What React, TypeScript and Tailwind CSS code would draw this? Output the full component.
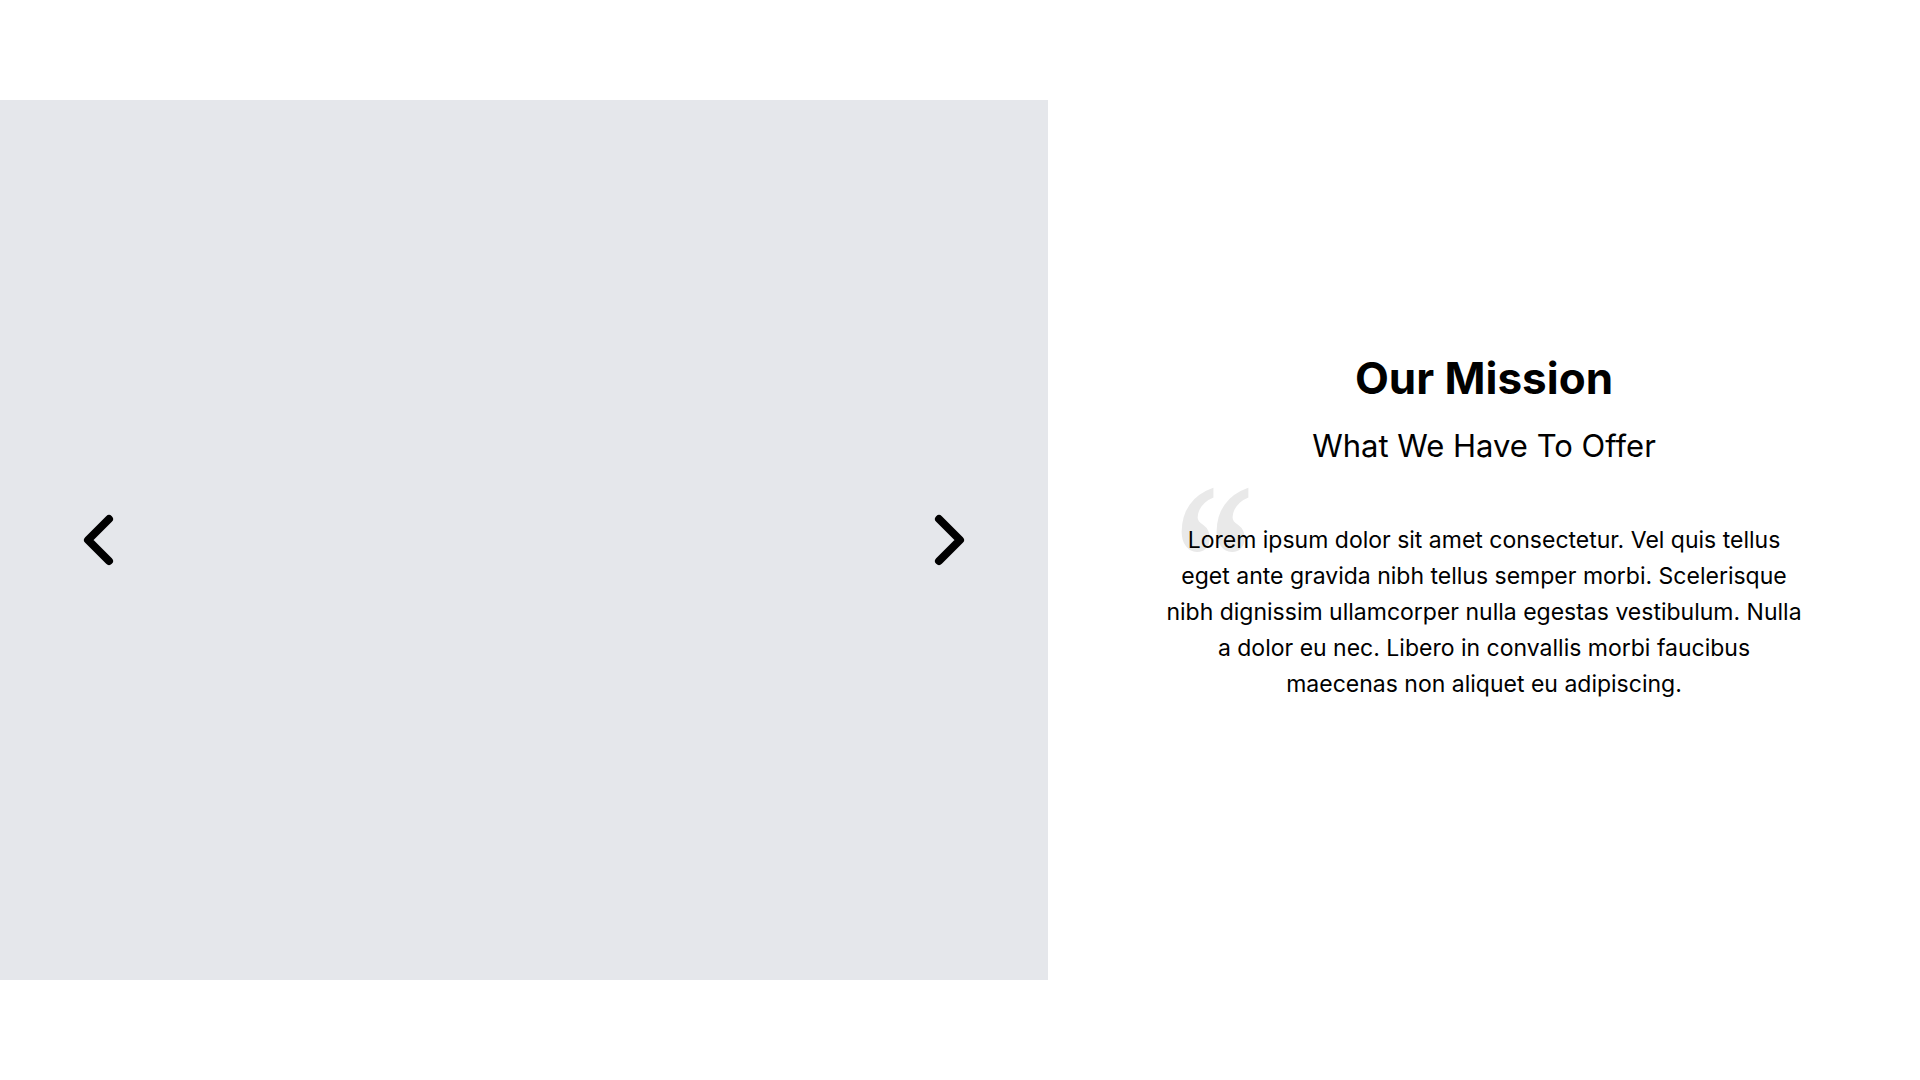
import { useState } from 'react'

const slides = ['slide-1', 'slide-2', 'slide-3']

function Chevron({ dir }: { dir: 'left' | 'right' }) {
  const d = dir === 'left' ? 'M27 5 L6 26 L27 47' : 'M5 5 L26 26 L5 47'
  return (
    <svg width="32" height="52" viewBox="0 0 32 52" fill="none">
      <path d={d} stroke="#000" strokeWidth="8" strokeLinecap="round" strokeLinejoin="round" />
    </svg>
  )
}

export default function App() {
  const [current, setCurrent] = useState(0)

  const prev = () => setCurrent((current - 1 + slides.length) % slides.length)
  const next = () => setCurrent((current + 1) % slides.length)

  return (
    <div className="w-full h-[1080px] bg-white py-[100px] flex" style={{ fontFamily: 'Inter, "Noto Sans", sans-serif' }}>
      {/* Image carousel */}
      <div
        className="w-[1048px] h-[880px] shrink-0 bg-gray-200 flex items-center justify-between px-[82px]"
        data-slide={slides[current]}
      >
        <button onClick={prev} className="cursor-pointer">
          <Chevron dir="left" />
        </button>
        <button onClick={next} className="cursor-pointer">
          <Chevron dir="right" />
        </button>
      </div>

      {/* Mission text */}
      <div className="flex-1 flex flex-col items-center justify-center pb-[26px] text-black">
        <h2 className="text-[44px] leading-[53px] font-bold">Our Mission</h2>
        <h3 className="text-[31px] leading-[36px] mt-[23px]">What We Have To Offer</h3>
        <div className="relative w-[640px] mt-[58px]">
          {/* decorative quote mark behind the text */}
          <span className="absolute left-[10px] -top-[70px] text-[212px] leading-none font-bold text-[#e9e9e9] select-none scale-x-[0.75] origin-left font-['Liberation_Serif',serif]">
            “
          </span>
          <p className="relative text-[23px] leading-[36px] text-center">
            Lorem ipsum dolor sit amet consectetur. Vel quis tellus eget ante gravida nibh tellus semper morbi.
            Scelerisque nibh dignissim ullamcorper nulla egestas vestibulum. Nulla a dolor eu nec. Libero in
            convallis morbi faucibus maecenas non aliquet eu adipiscing.
          </p>
        </div>
      </div>
    </div>
  )
}
